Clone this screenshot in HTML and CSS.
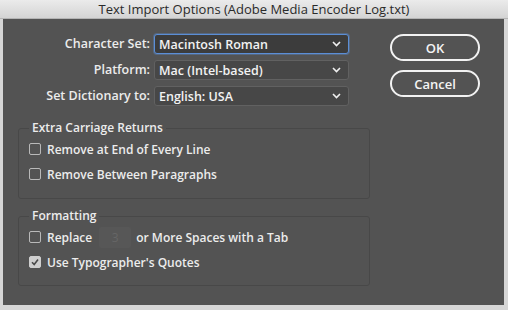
FILE: index.html
```html
<!DOCTYPE html>
<html lang="en">
<head>
  <meta charset="UTF-8" />
  <title>Text Import Options</title>
  <link rel="stylesheet" href="styles.css">
</head>
<body>
  <div class="titlebar">Text Import Options (Adobe Media Encoder Log.txt)</div>

  <div class="dialog">
    <div class="main">
      <div class="form">
        <label class="label">Character Set:</label>
        <div class="select focused">
          <span>Macintosh Roman</span>
          <svg class="chevron" width="9" height="6" viewBox="0 0 9 6"><polyline points="1,1 4.5,4.5 8,1" /></svg>
        </div>

        <label class="label">Platform:</label>
        <div class="select">
          <span>Mac (Intel-based)</span>
          <svg class="chevron" width="9" height="6" viewBox="0 0 9 6"><polyline points="1,1 4.5,4.5 8,1" /></svg>
        </div>

        <label class="label">Set Dictionary to:</label>
        <div class="select">
          <span>English: USA</span>
          <svg class="chevron" width="9" height="6" viewBox="0 0 9 6"><polyline points="1,1 4.5,4.5 8,1" /></svg>
        </div>
      </div>

      <fieldset class="group">
        <legend>Extra Carriage Returns</legend>
        <div class="row"><span class="box"></span>Remove at End of Every Line</div>
        <div class="row"><span class="box"></span>Remove Between Paragraphs</div>
      </fieldset>

      <fieldset class="group group-last">
        <legend>Formatting</legend>
        <div class="row">
          <span class="box"></span>Replace
          <span class="num">3</span>
          or More Spaces with a Tab
        </div>
        <div class="row">
          <span class="box checked">
            <svg width="10" height="10" viewBox="0 0 10 10"><polyline points="2,5.2 4.2,7.5 8,2.5" /></svg>
          </span>Use Typographer's Quotes
        </div>
      </fieldset>
    </div>

    <div class="buttons">
      <button class="btn">OK</button>
      <button class="btn">Cancel</button>
    </div>
  </div>
</body>
</html>
```

FILE: styles.css
```css
html, body {
  margin: 0;
  padding: 0;
}

body {
  width: 508px;
  height: 310px;
  background: #d6d6d6;
  font-family: "Open Sans", "DejaVu Sans", sans-serif;
  overflow: hidden;
}

.titlebar {
  height: 19px;
  line-height: 18px;
  text-align: center;
  font-size: 13px;
  color: #2a2a2a;
  background: linear-gradient(#ebebeb, #d4d4d4);
  border-bottom: 1px solid #b4b4b4;
  box-sizing: border-box;
}

.dialog {
  display: flex;
  margin: 0 4px 0 3px;
  height: 286px;
  background: #535353;
  color: #ececec;
  font-size: 12px;
  font-weight: 600;
}

.main {
  width: 367px;
}

.form {
  display: grid;
  grid-template-columns: 147px 195px;
  grid-auto-rows: 20px;
  column-gap: 4px;
  row-gap: 6px;
  padding-top: 15px;
  font-size: 12.5px;
}

.label {
  text-align: right;
  line-height: 20px;
}

.select {
  display: flex;
  align-items: center;
  justify-content: space-between;
  padding: 0 7px 0 4px;
  background: #474747;
  border: 1px solid #616161;
  border-radius: 3px;
  box-sizing: border-box;
  color: #f2f2f2;
}

.select.focused {
  background: #3c3c3c;
  border-color: #5b8ed6;
  box-shadow: 0 0 0 1px rgba(91, 142, 214, 0.35);
}

.chevron polyline {
  fill: none;
  stroke: #f0f0f0;
  stroke-width: 1.6;
}

.group {
  margin: 14px 0 0 15px;
  width: 352px;
  box-sizing: border-box;
  padding: 0 0 14px 10px;
  border: 1px solid #484848;
  border-radius: 3px;
  display: flex;
  flex-direction: column;
  gap: 5px;
}

.group-last {
  margin-top: 9px;
  padding-bottom: 13px;
}

.group legend {
  padding: 0 3px;
  line-height: 16px;
  margin-bottom: 3px;
}

.row {
  display: flex;
  align-items: center;
  height: 20px;
}

.box {
  width: 12px;
  height: 12px;
  border: 1px solid #b9b9b9;
  border-radius: 2px;
  box-sizing: border-box;
  margin-right: 6px;
  display: flex;
  align-items: center;
  justify-content: center;
}

.box.checked {
  background: #cfcfcf;
  border-color: #cfcfcf;
}

.box.checked polyline {
  fill: none;
  stroke: #4a4a4a;
  stroke-width: 1.6;
}

.num {
  width: 32px;
  height: 21px;
  margin: 0 5px 0 7px;
  background: #575757;
  border-radius: 2px;
  color: #666;
  font-weight: 400;
  line-height: 21px;
  text-align: center;
}

.buttons {
  display: flex;
  flex-direction: column;
  gap: 9px;
  padding-top: 15px;
  margin-left: 20px;
}

.btn {
  width: 90px;
  height: 27px;
  background: #535353;
  border: 2px solid #f2f2f2;
  border-radius: 14px;
  color: #f4f4f4;
  font-family: inherit;
  font-size: 13px;
  font-weight: 600;
  padding: 0;
}
```
